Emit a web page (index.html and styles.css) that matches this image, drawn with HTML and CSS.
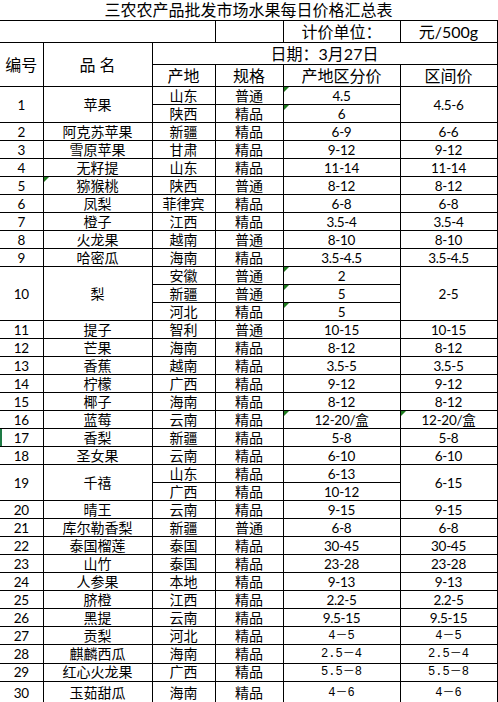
FILE: index.html
```html
<!DOCTYPE html>
<html lang="zh">
<head>
<meta charset="utf-8">
<title>三农农产品批发市场水果每日价格汇总表</title>
<link rel="stylesheet" href="styles.css">
</head>
<body>
<table class="sheet">
  <colgroup>
    <col class="c-no"><col class="c-name"><col class="c-origin"><col class="c-spec"><col class="c-price"><col class="c-range">
  </colgroup>
  <tr class="r-title"><td colspan="6" class="title">三农农产品批发市场水果每日价格汇总表</td></tr>
  <tr class="r-head"><td colspan="3" class="blank"></td><td></td><td class="hd">计价单位：</td><td class="hd">元/500g</td></tr>
  <tr class="r-head"><td rowspan="2" class="hd">编号</td><td rowspan="2" class="hd">品 名</td><td colspan="4" class="hd">日期：3月27日</td></tr>
  <tr class="r-head"><td class="hd">产地</td><td class="hd">规格</td><td class="hd">产地区分价</td><td class="hd">区间价</td></tr>

  <tr><td rowspan="2" class="num">1</td><td rowspan="2">苹果</td><td>山东</td><td>普通</td><td class="num tri">4.5</td><td rowspan="2" class="num">4.5-6</td></tr>
  <tr><td>陕西</td><td>精品</td><td class="num tri">6</td></tr>
  <tr><td class="num">2</td><td>阿克苏苹果</td><td>新疆</td><td>精品</td><td class="num">6-9</td><td class="num">6-6</td></tr>
  <tr><td class="num">3</td><td>雪原苹果</td><td>甘肃</td><td>精品</td><td class="num">9-12</td><td class="num">9-12</td></tr>
  <tr><td class="num">4</td><td>无籽提</td><td>山东</td><td>精品</td><td class="num">11-14</td><td class="num">11-14</td></tr>
  <tr><td class="num">5</td><td class="tri">猕猴桃</td><td>陕西</td><td>普通</td><td class="num">8-12</td><td class="num">8-12</td></tr>
  <tr><td class="num">6</td><td>凤梨</td><td>菲律宾</td><td>精品</td><td class="num">6-8</td><td class="num">6-8</td></tr>
  <tr><td class="num">7</td><td>橙子</td><td>江西</td><td>精品</td><td class="num">3.5-4</td><td class="num">3.5-4</td></tr>
  <tr><td class="num">8</td><td>火龙果</td><td>越南</td><td>普通</td><td class="num">8-10</td><td class="num">8-10</td></tr>
  <tr><td class="num">9</td><td>哈密瓜</td><td>海南</td><td>精品</td><td class="num">3.5-4.5</td><td class="num">3.5-4.5</td></tr>
  <tr><td rowspan="3" class="num">10</td><td rowspan="3">梨</td><td>安徽</td><td>普通</td><td class="num tri">2</td><td rowspan="3" class="num">2-5</td></tr>
  <tr><td>新疆</td><td>普通</td><td class="num tri">5</td></tr>
  <tr><td>河北</td><td>精品</td><td class="num tri">5</td></tr>
  <tr><td class="num">11</td><td>提子</td><td>智利</td><td>普通</td><td class="num">10-15</td><td class="num">10-15</td></tr>
  <tr><td class="num">12</td><td>芒果</td><td>海南</td><td>精品</td><td class="num">8-12</td><td class="num">8-12</td></tr>
  <tr><td class="num">13</td><td>香蕉</td><td>越南</td><td>精品</td><td class="num">3.5-5</td><td class="num">3.5-5</td></tr>
  <tr><td class="num">14</td><td>柠檬</td><td>广西</td><td>精品</td><td class="num">9-12</td><td class="num">9-12</td></tr>
  <tr><td class="num">15</td><td>椰子</td><td>海南</td><td>精品</td><td class="num">8-12</td><td class="num">8-12</td></tr>
  <tr><td class="num">16</td><td>蓝莓</td><td>云南</td><td>精品</td><td class="num tri">12-20/盒</td><td class="num tri">12-20/盒</td></tr>
  <tr><td class="num mark">17</td><td>香梨</td><td>新疆</td><td>精品</td><td class="num">5-8</td><td class="num">5-8</td></tr>
  <tr><td class="num">18</td><td>圣女果</td><td>云南</td><td>精品</td><td class="num">6-10</td><td class="num">6-10</td></tr>
  <tr><td rowspan="2" class="num">19</td><td rowspan="2">千禧</td><td>山东</td><td>精品</td><td class="num">6-13</td><td rowspan="2" class="num">6-15</td></tr>
  <tr><td>广西</td><td>精品</td><td class="num">10-12</td></tr>
  <tr><td class="num">20</td><td>晴王</td><td>云南</td><td>精品</td><td class="num">9-15</td><td class="num">9-15</td></tr>
  <tr><td class="num">21</td><td>库尔勒香梨</td><td>新疆</td><td>普通</td><td class="num">6-8</td><td class="num">6-8</td></tr>
  <tr><td class="num">22</td><td>泰国榴莲</td><td>泰国</td><td>精品</td><td class="num">30-45</td><td class="num">30-45</td></tr>
  <tr><td class="num">23</td><td>山竹</td><td>泰国</td><td>精品</td><td class="num">23-28</td><td class="num">23-28</td></tr>
  <tr><td class="num">24</td><td>人参果</td><td>本地</td><td>精品</td><td class="num">9-13</td><td class="num">9-13</td></tr>
  <tr><td class="num">25</td><td>脐橙</td><td>江西</td><td>精品</td><td class="num">2.2-5</td><td class="num">2.2-5</td></tr>
  <tr><td class="num">26</td><td>黑提</td><td>云南</td><td>精品</td><td class="num">9.5-15</td><td class="num">9.5-15</td></tr>
  <tr class="r-song"><td class="num">27</td><td>贡梨</td><td>河北</td><td>精品</td><td class="mono">4－5</td><td class="mono">4－5</td></tr>
  <tr class="r-song"><td class="num">28</td><td>麒麟西瓜</td><td>海南</td><td>精品</td><td class="mono">2.5－4</td><td class="mono">2.5－4</td></tr>
  <tr class="r-song"><td class="num">29</td><td>红心火龙果</td><td>广西</td><td>精品</td><td class="mono">5.5－8</td><td class="mono">5.5－8</td></tr>
  <tr class="r-song r-last"><td class="num">30</td><td>玉茹甜瓜</td><td>海南</td><td>精品</td><td class="mono">4－6</td><td class="mono">4－6</td></tr>
</table>
</body>
</html>
```
FILE: styles.css
```css
html, body {
  margin: 0;
  padding: 0;
  background: #ffffff;
}
body {
  font-family: Lato, "Noto Sans CJK SC", sans-serif;
  color: #000000;
  overflow: hidden;
}
.sheet {
  border-collapse: collapse;
  table-layout: fixed;
  width: 497px;
}
.c-no { width: 43px; }
.c-name { width: 109px; }
.c-origin { width: 63px; }
.c-spec { width: 68px; }
.c-price { width: 117px; }
.c-range { width: 97px; }

.sheet td {
  border: 1px solid #000000;
  padding: 0;
  height: 17px;
  text-align: center;
  vertical-align: middle;
  font-size: 14px;
  line-height: 16px;
  white-space: nowrap;
  overflow: hidden;
}
.sheet tr > td:first-child {
  border-left: none;
}
.sheet .r-title td {
  height: 20px;
  border-top: none;
  border-left: none;
  border-right: none;
}
.sheet .title {
  font-size: 16px;
  line-height: 20px;
}
.sheet .r-head td {
  height: 21px;
}
.sheet .hd {
  font-size: 16px;
  line-height: 20px;
}
.sheet .num {
  font-size: 13.5px;
  letter-spacing: -0.3px;
}
.sheet .tri {
  position: relative;
}
.sheet .tri::before {
  content: "";
  position: absolute;
  left: 0;
  top: 0;
  border-top: 5px solid #1e7b1e;
  border-right: 5px solid transparent;
}
.sheet .mark {
  box-shadow: inset 2px 0 0 #1e7b45;
}
.sheet .mono {
  font-family: "Liberation Mono", "Noto Sans CJK SC", monospace;
  font-size: 12px;
  letter-spacing: 0;
}
.sheet .r-song td {
  height: 17.4px;
}
.sheet .r-last td {
  height: 22px;
}
```
